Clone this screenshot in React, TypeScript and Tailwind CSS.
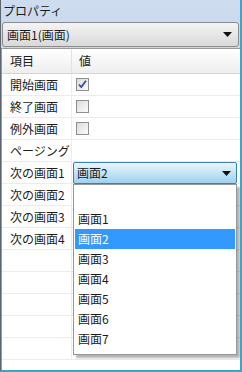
const font = { fontFamily: '"Noto Sans CJK JP", "Noto Sans", sans-serif' };

function Arrow() {
  return (
    <svg width="9" height="5" viewBox="0 0 9 5" className="shrink-0">
      <path d="M0 0h9L4.5 5z" fill="#111" />
    </svg>
  );
}

function CheckBox({ checked }: { checked?: boolean }) {
  return (
    <div className="flex h-[13px] w-[13px] items-center justify-center border border-[#8f8f8f] bg-gradient-to-br from-[#dcdcdc] to-[#fbfbfb]">
      {checked && (
        <svg width="9" height="9" viewBox="0 0 9 9">
          <path d="M1 4.5l2.3 2.6L8 0.8" fill="none" stroke="#3a4f9a" strokeWidth="1.8" />
        </svg>
      )}
    </div>
  );
}

const rows: { label: string; check?: boolean; checked?: boolean }[] = [
  { label: "開始画面", check: true, checked: true },
  { label: "終了画面", check: true },
  { label: "例外画面", check: true },
  { label: "ページング" },
  { label: "次の画面1" },
  { label: "次の画面2" },
  { label: "次の画面3" },
  { label: "次の画面4" },
  { label: "" },
  { label: "" },
  { label: "" },
  { label: "" },
  { label: "" },
];

const items = ["画面1", "画面2", "画面3", "画面4", "画面5", "画面6", "画面7"];

export default function App() {
  return (
    <div
      style={font}
      className="relative flex h-[372px] w-[242px] flex-col overflow-hidden border-b-2 border-l border-r-2 border-b-[#3ea4c8] border-l-[#5b6670] border-r-[#3ea4c8] bg-gradient-to-b from-[#cddcef] to-[#a8c2df] text-[12px] text-[#1b1b1b]"
    >
      <div className="flex h-[22px] items-center px-[2px] leading-none">プロパティ</div>
      <div className="mx-[1px] flex h-[25px] items-center justify-between rounded-[3px] border border-[#8c8c8c] bg-gradient-to-b from-[#f4f4f4] to-[#d9d9d9] pl-[4px] pr-[6px]">
        <span>画面1(画面)</span>
        <Arrow />
      </div>
      <div className="relative mt-[1px] flex-1 border-l border-t border-[#9a9a9a] bg-white">
        <div className="flex h-[25px] border-b border-[#d4d4d4] bg-gradient-to-b from-white to-[#eeeeee]">
          <div className="flex w-[70px] items-center border-r border-[#e2e2e2] pl-[8px]">項目</div>
          <div className="flex items-center pl-[7px]">値</div>
        </div>
        {rows.map((r, i) => (
          <div key={i} className="flex h-[22px] border-b border-[#ececec]">
            <div className="flex w-[70px] items-center whitespace-nowrap border-r border-[#ececec] pl-[8px]">
              {r.label}
            </div>
            <div className="flex flex-1 items-center pl-[4px]">
              {r.check && <CheckBox checked={r.checked} />}
            </div>
          </div>
        ))}
        <div className="absolute left-[71px] top-[113px] w-[164px]">
          <div className="flex h-[22px] items-center justify-between rounded-[2px] border border-[#3c7fb1] bg-gradient-to-b from-[#eaf6fd] via-[#c4e4f7] to-[#9fd0ee] pl-[3px] pr-[5px]">
            <span>画面2</span>
            <Arrow />
          </div>
          <div className="h-[171px] border border-[#979797] bg-white pt-[24px] shadow-[3px_3px_2px_rgba(0,0,0,0.3)]">
            {items.map((it, i) => (
              <div
                key={it}
                className={
                  i === 1
                    ? "mx-[1px] flex h-[20px] items-center bg-[#3399ff] pl-[3px] text-white"
                    : "mx-[1px] flex h-[20px] items-center pl-[3px]"
                }
              >
                {it}
              </div>
            ))}
          </div>
        </div>
      </div>
    </div>
  );
}
